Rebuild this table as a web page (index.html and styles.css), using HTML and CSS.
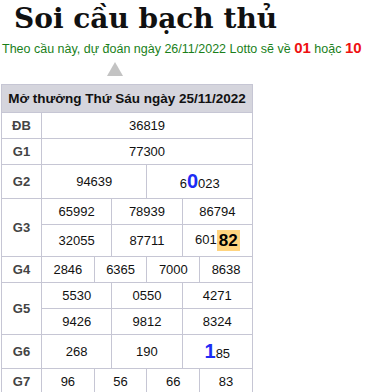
FILE: index.html
```html
<!DOCTYPE html>
<html lang="vi">
<head>
<meta charset="utf-8">
<title>Soi cầu bạch thủ</title>
<link rel="stylesheet" href="styles.css">
</head>
<body>
<h1 class="title">Soi cầu bạch thủ</h1>
<p class="predict">Theo cầu này, dự đoán ngày 26/11/2022 Lotto sẽ về <b class="hot">01</b> hoặc <b class="hot">10</b></p>
<div class="arrow"></div>
<table class="kq">
  <colgroup>
    <col class="c-label">
    <col><col><col><col><col><col><col><col><col><col><col><col>
  </colgroup>
  <thead>
    <tr><th colspan="13" class="head">Mở thưởng Thứ Sáu ngày 25/11/2022</th></tr>
  </thead>
  <tbody>
    <tr><th class="lbl">ĐB</th><td colspan="12">36819</td></tr>
    <tr><th class="lbl">G1</th><td colspan="12">77300</td></tr>
    <tr><th class="lbl">G2</th><td colspan="6">94639</td><td colspan="6">6<b class="mark">0</b>023</td></tr>
    <tr><th class="lbl" rowspan="2">G3</th><td colspan="4">65992</td><td colspan="4">78939</td><td colspan="4">86794</td></tr>
    <tr><td colspan="4">32055</td><td colspan="4">87711</td><td colspan="4">601<b class="pair">82</b></td></tr>
    <tr><th class="lbl">G4</th><td colspan="3">2846</td><td colspan="3">6365</td><td colspan="3">7000</td><td colspan="3">8638</td></tr>
    <tr><th class="lbl" rowspan="2">G5</th><td colspan="4">5530</td><td colspan="4">0550</td><td colspan="4">4271</td></tr>
    <tr><td colspan="4">9426</td><td colspan="4">9812</td><td colspan="4">8324</td></tr>
    <tr><th class="lbl">G6</th><td colspan="4">268</td><td colspan="4">190</td><td colspan="4"><b class="mark">1</b>85</td></tr>
    <tr><th class="lbl">G7</th><td colspan="3">96</td><td colspan="3">56</td><td colspan="3">66</td><td colspan="3">83</td></tr>
  </tbody>
</table>
</body>
</html>
```
FILE: styles.css
```css
html, body {
  margin: 0;
  padding: 0;
  background: #fff;
}
body {
  font-family: "Liberation Sans", Arial, sans-serif;
  color: #111;
}
.title {
  margin: 0 0 0 14px;
  height: 38px;
  font-family: "DejaVu Serif", serif;
  font-weight: bold;
  font-size: 28px;
  line-height: 38px;
  color: #111;
}
.predict {
  margin: 0 0 0 2px;
  font-size: 12.5px;
  line-height: 20px;
  color: #1a7f1a;
  white-space: nowrap;
}
.hot {
  color: #ee1111;
  font-size: 15px;
}
.arrow {
  width: 0;
  height: 0;
  margin: 3px 0 0 107px;
  border-left: 8px solid transparent;
  border-right: 8px solid transparent;
  border-bottom: 14px solid #c3c3c3;
}
.kq {
  margin: 8px 0 0 1px;
  width: 252px;
  table-layout: fixed;
  border-collapse: collapse;
  font-size: 13px;
}
.c-label {
  width: 40px;
}
.kq th, .kq td {
  border: 1px solid #c6c6d4;
  padding: 5px 0;
  line-height: 15px;
  text-align: center;
  color: #111;
}
.kq th.head {
  background: #d5d5dd;
  font-size: 13.5px;
  padding: 6px 0;
  font-weight: bold;
  color: #111;
}
.kq th.lbl {
  font-weight: bold;
  color: #444;
}
.mark {
  color: #1e2cf5;
  font-size: 20px;
  line-height: 23px;
}
.pair {
  display: inline-block;
  background: #ffd47f;
  font-size: 17px;
  line-height: 21px;
  padding: 0 2px;
  color: #000;
  vertical-align: middle;
}
```
